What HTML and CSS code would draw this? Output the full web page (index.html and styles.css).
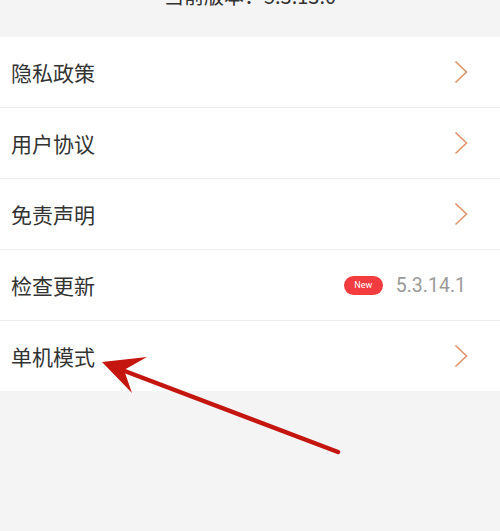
FILE: index.html
```html
<!DOCTYPE html>
<html lang="zh-CN">
<head>
<meta charset="utf-8">
<title>关于</title>
<link rel="stylesheet" href="styles.css">
</head>
<body>
<div class="page">
  <div class="header"><div class="version">当前版本：5.3.13.0</div></div>
  <ul class="list">
    <li class="row"><span class="label">隐私政策</span><svg class="chev" viewBox="0 0 14 24"><path d="M1.5 1.5 L12.5 12 L1.5 22.5" /></svg></li>
    <li class="row"><span class="label">用户协议</span><svg class="chev" viewBox="0 0 14 24"><path d="M1.5 1.5 L12.5 12 L1.5 22.5" /></svg></li>
    <li class="row"><span class="label">免责声明</span><svg class="chev" viewBox="0 0 14 24"><path d="M1.5 1.5 L12.5 12 L1.5 22.5" /></svg></li>
    <li class="row"><span class="label">检查更新</span><span class="right"><span class="badge">New</span><span class="ver">5.3.14.1</span></span></li>
    <li class="row"><span class="label">单机模式</span><svg class="chev" viewBox="0 0 14 24"><path d="M1.5 1.5 L12.5 12 L1.5 22.5" /></svg></li>
  </ul>
  <svg class="arrow" viewBox="0 0 500 531" width="500" height="531">
    <line x1="338" y1="452" x2="122" y2="370" stroke="#c4160f" stroke-width="4.5" stroke-linecap="round"/>
    <polygon points="102,362 147,357 124,370 132,393" fill="#c4160f"/>
  </svg>
</div>
</body>
</html>
```

FILE: styles.css
```css
html, body {
  margin: 0;
  padding: 0;
  background: #f4f4f4;
}
.page {
  position: relative;
  width: 500px;
  height: 531px;
  overflow: hidden;
  font-family: "Noto Sans CJK SC", "Noto Sans", sans-serif;
  color: #333;
}
.header {
  height: 37px;
  overflow: hidden;
}
.version {
  margin-top: -14px;
  text-align: center;
  font-size: 20px;
  line-height: 20px;
  color: #333;
}
.list {
  list-style: none;
  margin: 0;
  padding: 0;
  background: #fff;
}
.row {
  height: 70px;
  display: flex;
  align-items: center;
  justify-content: space-between;
  padding: 0 32px 0 11px;
  border-bottom: 1px solid #ededed;
}
.row:last-child {
  border-bottom: none;
}
.label {
  font-size: 21px;
  line-height: 1;
  color: #333;
}
.chev {
  width: 14px;
  height: 24px;
  fill: none;
  stroke: #e0946c;
  stroke-width: 1.6;
}
.right {
  display: flex;
  align-items: center;
  gap: 13px;
  margin-right: 2px;
}
.badge {
  width: 39px;
  height: 19px;
  border-radius: 10px;
  background: #f23c40;
  color: #fff;
  font-family: Roboto, "Liberation Sans", sans-serif;
  font-size: 9px;
  display: flex;
  align-items: center;
  justify-content: center;
}
.ver {
  font-family: Roboto, "Liberation Sans", sans-serif;
  font-size: 19.5px;
  color: #9a9a9a;
}
.arrow {
  position: absolute;
  left: 0;
  top: 0;
  pointer-events: none;
}
```
